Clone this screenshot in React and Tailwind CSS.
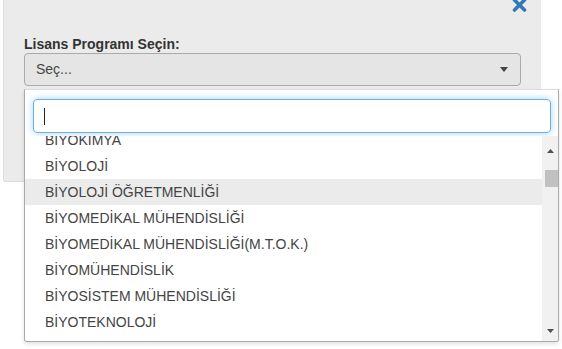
import { useState } from "react";

const programs = [
  "BİYOKİMYA",
  "BİYOLOJİ",
  "BİYOLOJİ ÖĞRETMENLİĞİ",
  "BİYOMEDİKAL MÜHENDİSLİĞİ",
  "BİYOMEDİKAL MÜHENDİSLİĞİ(M.T.O.K.)",
  "BİYOMÜHENDİSLİK",
  "BİYOSİSTEM MÜHENDİSLİĞİ",
  "BİYOTEKNOLOJİ",
];

const ProgramSelect = () => {
  const [hovered, setHovered] = useState(2);

  return (
    <div className="relative w-[562px] h-[349px] overflow-hidden bg-white font-['Liberation_Sans',Arial,sans-serif] text-[14px] text-[#333]">
      {/* Panel */}
      <div className="ml-[3px] w-[538px] h-[182px] bg-[#ebebeb] border-l border-b border-[#dcdcdc] rounded-bl-[3px] pl-[20px] pr-[14px]">
        <div className="flex justify-end h-[36px]">
          <svg width="15" height="14" viewBox="0 0 15 14" className="-mt-[2px]">
            <path
              d="M2.5 2 L12.5 12 M12.5 2 L2.5 12"
              stroke="#3479b7"
              strokeWidth="3.6"
              strokeLinecap="round"
            />
          </svg>
        </div>
        <label className="block font-bold leading-[17px] text-[#333]">
          Lisans Programı Seçin:
        </label>
        <div className="w-[497px] h-[33px] flex items-center justify-between border border-[#aaa] rounded-[4px] bg-[#e5e5e5] pl-[11px] pr-[12px] text-[#444]">
          <span>Seç...</span>
          <svg width="8" height="5" viewBox="0 0 8 5">
            <path d="M0 0 L8 0 L4 5 Z" fill="#444" />
          </svg>
        </div>
      </div>

      {/* Dropdown */}
      <div className="absolute left-[24px] top-[89px] w-[535px] h-[253px] overflow-hidden flex flex-col bg-white border border-[#aaa] border-t-[#ddd] rounded-b-[3px] shadow-[0_2px_4px_rgba(0,0,0,0.12)]">
        <div className="pt-[9px] pl-[8px] pr-[7px] pb-[3px]">
          <div className="h-[34px] flex items-center border border-[#66afe9] rounded-[4px] shadow-[0_0_7px_rgba(102,175,233,0.55)] pl-[10px]">
            <span className="w-[1px] h-[17px] bg-[#222]" />
          </div>
        </div>
        <div className="flex flex-1 min-h-0 overflow-hidden">
          <ul className="flex-1 overflow-hidden">
            <div className="-mt-[9px]">
              {programs.map((p, i) => (
                <li
                  key={p}
                  onMouseEnter={() => setHovered(i)}
                  className={
                    "h-[26px] flex items-center pl-[20px] text-[#444] " +
                    (hovered === i ? "bg-[#ebebeb]" : "bg-white")
                  }
                >
                  {p}
                </li>
              ))}
            </div>
          </ul>
          {/* Scrollbar */}
          <div className="w-[16px] flex flex-col items-center bg-[#f1f1f1] pb-[8px]">
            <div className="h-[17px] flex items-end justify-center">
              <svg width="7" height="4" viewBox="0 0 7 4">
                <path d="M0 4 L7 4 L3.5 0 Z" fill="#505050" />
              </svg>
            </div>
            <div className="mt-[17px] ml-[2px] w-[13px] h-[17px] bg-[#c1c1c1]" />
            <div className="flex-1" />
            <svg width="7" height="4" viewBox="0 0 7 4">
              <path d="M0 0 L7 0 L3.5 4 Z" fill="#505050" />
            </svg>
          </div>
        </div>
      </div>
    </div>
  );
};

export default ProgramSelect;
